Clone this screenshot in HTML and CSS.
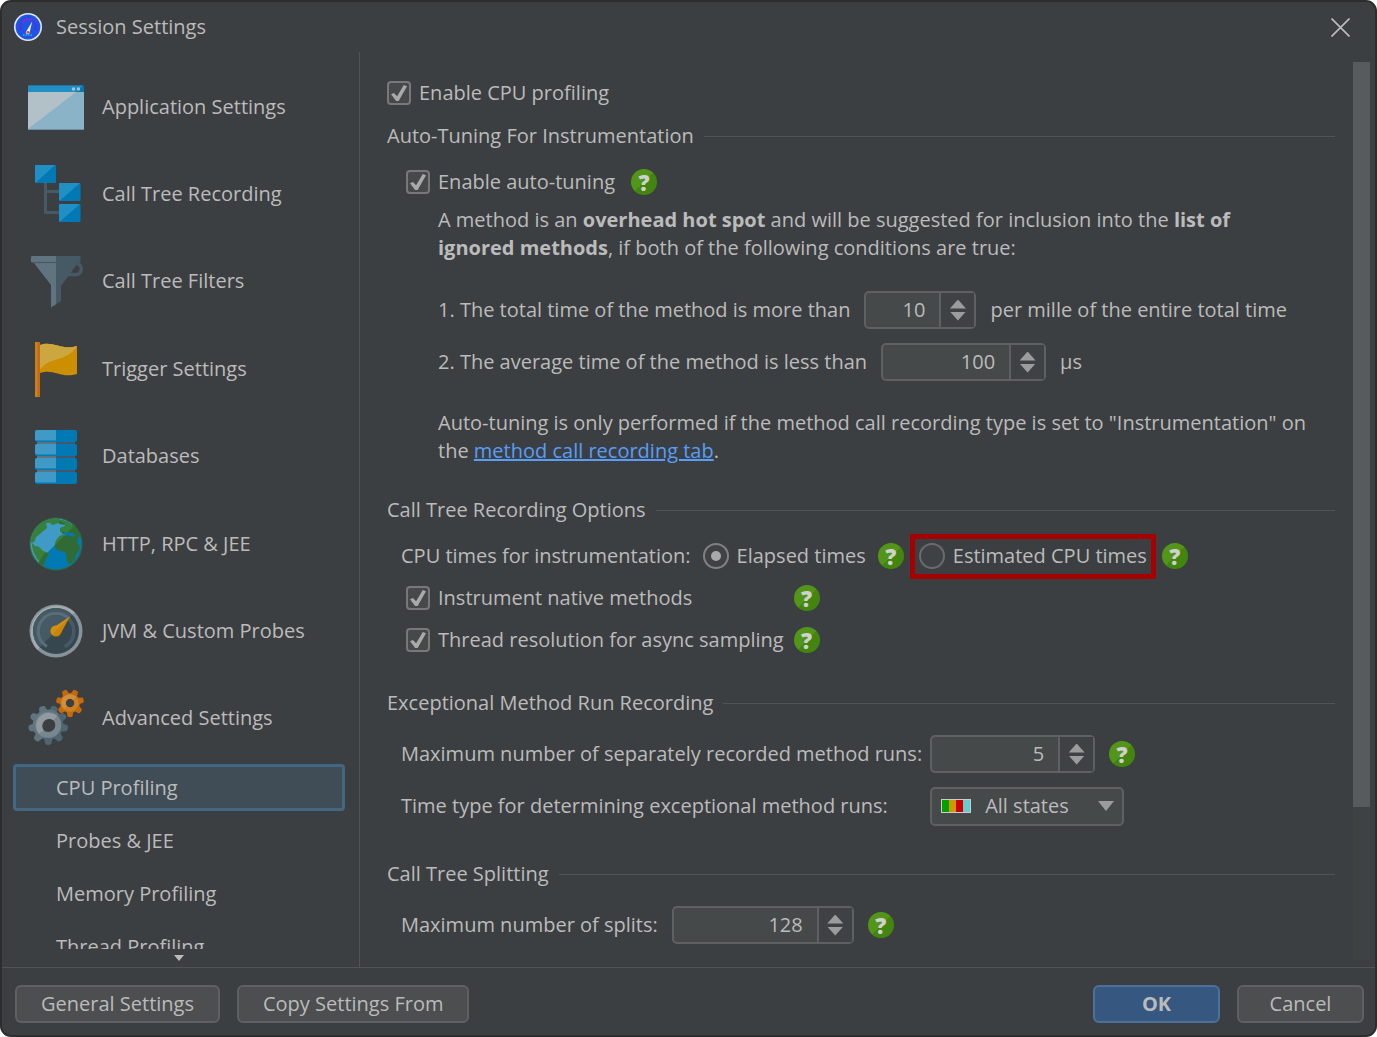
FILE: index.html
```html
<!DOCTYPE html>
<html lang="en">
<head>
  <meta charset="utf-8">
  <title>Session Settings</title>
  <link rel="stylesheet" href="styles.css">
</head>
<body>
  <div class="dialog">
    <header class="titlebar">
      <svg class="logo" viewBox="0 0 28 28" aria-hidden="true">
        <circle cx="14" cy="14" r="14" fill="#dfe6f5"/>
        <circle cx="14" cy="14" r="12.4" fill="#1d55e6"/>
        <circle cx="14" cy="14" r="10" fill="none" stroke="#3a45d8" stroke-dasharray="1 1.6"/>
        <path d="M7 17.5a7.8 7.8 0 1 1 14 0" fill="none" stroke="#5a2fd0" stroke-width="1.6"/>
        <path d="M8 10a7.8 7.8 0 0 1 10-3" fill="none" stroke="#8a2fd0" stroke-width="1.6"/>
        <path d="M9 22h10" stroke="#1fa3d8" stroke-width="2" stroke-dasharray="1.5 1"/>
        <path d="M18.2 8.5 15.6 19.5a1.8 1.8 0 1 1-3.2-1.3z" fill="#f2f4fb"/>
        <circle cx="14" cy="19.3" r="1.4" fill="#e0452c"/>
      </svg>
      <h1>Session Settings</h1>
      <button type="button" class="close" aria-label="Close">
        <svg viewBox="0 0 18 18" aria-hidden="true"><path d="M.5.5l17 17M17.5.5l-17 17" stroke="#bbb" stroke-width="1.6"/></svg>
      </button>
    </header>

    <div class="body">
      <nav class="sidebar">
        <div class="nav-scroll">
          <ul class="sections">
            <li><a href="#application">
              <svg viewBox="0 0 56 56" aria-hidden="true">
                <path d="M0 13h56v38H0z" fill="#8ab3c8"/>
                <path d="M0 13h48L0 50z" fill="#b2c0c8"/>
                <path d="M0 7.500a1 1 0 0 1 1-1h54a1 1 0 0 1 1 1V13H0z" fill="#0079b5"/>
                <path d="M0 7.500a1 1 0 0 1 1-1h54L48 13H0z" fill="#208fc4"/>
                <path d="M0 50.500h56" stroke="#7291a3"/>
                <circle cx="45.500" cy="10" r="1.700" fill="#b2c0c8"/>
                <circle cx="50.500" cy="10" r="1.700" fill="#b2c0c8"/>
              </svg>
              Application Settings</a></li>
            <li><a href="#recording">
              <svg viewBox="0 0 56 56" aria-hidden="true">
                <path d="M17.500 16v30.500H32M17.500 25.500H32" fill="none" stroke="#455a64" stroke-width="3"/>
                <g fill="#0079b5">
                  <rect x="7" y="-1" width="21" height="18" rx="1"/>
                  <rect x="31" y="17" width="21.500" height="18" rx="1"/>
                  <rect x="31" y="38" width="21.500" height="18" rx="1"/>
                </g>
                <path d="M7 0a1 1 0 0 1 1-1h19L8 16.500H7zM31 18a1 1 0 0 1 1-1h20L32 34.500h-1zM31 39a1 1 0 0 1 1-1h20L32 55.500h-1z" fill="#208fc4"/>
              </svg>
              Call Tree Recording</a></li>
            <li><a href="#filters">
              <svg viewBox="0 0 56 56" aria-hidden="true">
                <path d="M38 21.500h8a5 5 0 0 0 3-11" fill="none" stroke="#455a64" stroke-width="3.500"/>
                <path d="M3 4a1 1 0 0 1 1-1h24v29h-5L6 10 3 9z" fill="#607480"/>
                <path d="M28 3h24.500v6L50 10 33 33v15l-10 6.500 5-6z" fill="#455a64"/>
                <path d="M23 32h5v19.200l-5 3.300z" fill="#607480"/>
                <path d="M4 9.500h24" stroke="#485a64" stroke-width="1.200"/>
              </svg>
              Call Tree Filters</a></li>
            <li><a href="#triggers">
              <svg viewBox="0 0 56 56" aria-hidden="true">
                <path d="M7 1h5v55H7z" fill="#c36a12"/>
                <path d="M7 1h2.500v55H7z" fill="#c5821f"/>
                <path d="M12 4c13-5 22 6 37 1v28c-16 5-23-6-37-1z" fill="#cc8f00"/>
                <path d="M12 4c13-5 22 6 37 1-9 16-30 11-37 24z" fill="#cca63f"/>
              </svg>
              Trigger Settings</a></li>
            <li><a href="#databases">
              <svg viewBox="0 0 56 56" aria-hidden="true">
                <path d="M9 9h38v40H9z" fill="#3f5966"/>
                <path d="M9 9h19v40H9z" fill="#607480"/>
                <g fill="#0079b5">
                  <rect x="7" y="2" width="42" height="12" rx="2"/>
                  <rect x="7" y="16" width="42" height="12" rx="2"/>
                  <rect x="7" y="30" width="42" height="12" rx="2"/>
                  <rect x="7" y="44" width="42" height="12" rx="2"/>
                </g>
                <path d="M28 2H9q-2 0-2 2v7q0 1.500 2 1.500h19zM28 16H9q-2 0-2 2v7q0 1.500 2 1.500h19zM28 30H9q-2 0-2 2v7q0 1.500 2 1.500h19zM28 44H9q-2 0-2 2v7q0 1.500 2 1.500h19z" fill="#3f9ac6"/>
              </svg>
              Databases</a></li>
            <li><a href="#http">
              <svg viewBox="0 0 56 56" aria-hidden="true">
                <clipPath id="globe"><circle cx="28" cy="28" r="25.500"/></clipPath>
                <circle cx="28" cy="28" r="26.500" fill="#306b35"/>
                <g clip-path="url(#globe)">
                  <path d="M0 0h56v56H0z" fill="#0079b5"/>
                  <path d="M0 0h56L0 56z" fill="#3f9ac6"/>
                  <path d="M2 27c3 0 3 1 5 3 5 0 6 3 8 5l6 2c-1 4-4 5-4 9-2 2-2 5 0 8L8 50C2 44 1 34 2 27z" fill="#36803a"/>
                  <path d="M3 27q1 12 8 19" fill="none" stroke="#3f9ac6" stroke-width="1.500"/>
                  <path d="M17 37l4 0c-1 4-4 5-4 9-2 1-2 5 0 8l-6-4q-1-4 3-9z" fill="#306b35"/>
                  <path d="M2 26C3 13 13 4 21 3l9-1c4 0 2 5-2 6l-4 1-2-2-4 0 1 5-6 5-5 4-1 4q-2 3-7 1z" fill="#36803a"/>
                  <path d="M31 5c4-2 9 1 13 4l3-1 6 11 1 5-3-4-2 6 3 5c0 4-3 5-4 8-1 5-3 7-7 9-3-2-2-8-4-12l-4-1c-4 0-7-3-6-7 1-4 4-8 8-9l3 1 2-1 6 2 1-2-6-3-3 1-4 1-1-4 6-3c0-3-5-2-8-3z" fill="#306b35"/>
                  <path d="M31 5c4-2 9 1 13 4l1 2L27 29c0-4 4-10 8-10l1-3-4 0 0-4 5-2c0-3-3-4-6-5z" fill="#36803a"/>
                  <path d="M36 17l4 1 5 0" stroke="#0079b5" stroke-width="2" fill="none"/>
                </g>
              </svg>
              HTTP, RPC &amp; JEE</a></li>
            <li><a href="#probes">
              <svg viewBox="0 0 56 56" aria-hidden="true">
                <circle cx="28" cy="28" r="26.500" fill="#87939a"/>
                <path d="M9.300 46.700A26.500 26.500 0 0 1 46.700 9.300z" fill="#a3abaf"/>
                <circle cx="28" cy="28" r="23" fill="#37474f"/>
                <path d="M11.700 44.300A23 23 0 0 1 44.300 11.700z" fill="#455a64"/>
                <path d="M19 43.500a17.800 17.800 0 1 1 18 0" fill="none" stroke="#5a6e79" stroke-width="3"/>
                <path d="M41 16a17.800 17.800 0 0 1-4 27.500" fill="none" stroke="#455a64" stroke-width="3"/>
                <path d="M42 13.500 33 30l-7-6z" fill="#cc8500"/>
                <circle cx="28" cy="28" r="5.500" fill="#cc8500"/>
                <path d="M42 13.500 24 31.500a5.500 5.500 0 0 1 5-9z" fill="#d09018"/>
              </svg>
              JVM &amp; Custom Probes</a></li>
            <li><a href="#advanced">
              <svg viewBox="0 0 56 56" aria-hidden="true">
                <defs>
                  <path id="tooth" d="M-4.500-12 -3-19q3-2 6 0L4.500-12z"/>
                  <path id="cog" d="M-3.500-8-2.500-13.500q2.500-1 5 0L3.500-8z"/>
                </defs>
                <g transform="translate(20.300 35)" fill="#4f6571">
                  <circle r="15"/>
                  <use href="#tooth" transform="rotate(20)"/>
                  <use href="#tooth" transform="rotate(60)"/>
                  <use href="#tooth" transform="rotate(100)"/>
                  <use href="#tooth" transform="rotate(140)"/>
                  <use href="#tooth" transform="rotate(180)"/>
                  <g fill="#607480">
                    <path d="M-11 11A15 15 0 0 1 11-11z"/>
                    <use href="#tooth" transform="rotate(220)"/>
                    <use href="#tooth" transform="rotate(260)"/>
                    <use href="#tooth" transform="rotate(300)"/>
                    <use href="#tooth" transform="rotate(340)"/>
                  </g>
                  <circle r="10" fill="#3c3f41" stroke="#78868d" stroke-width="6"/>
                  <path d="M-7 7A10 10 0 0 1 7-7" fill="none" stroke="#909a9f" stroke-width="6"/>
                </g>
                <g transform="translate(42 13)" fill="#c46a08">
                  <circle r="10"/>
                  <use href="#cog" transform="rotate(26)"/>
                  <use href="#cog" transform="rotate(77)"/>
                  <use href="#cog" transform="rotate(129)"/>
                  <use href="#cog" transform="rotate(180)"/>
                  <use href="#cog" transform="rotate(231)"/>
                  <use href="#cog" transform="rotate(283)"/>
                  <use href="#cog" transform="rotate(334)"/>
                  <circle r="6.500" fill="#3c3f41" stroke="#cc8128" stroke-width="4.500"/>
                  <path d="M-4.600 4.600A6.500 6.500 0 0 1 4.600-4.600" fill="none" stroke="#d08f3e" stroke-width="4.500"/>
                </g>
              </svg>
              Advanced Settings</a></li>
          </ul>
          <ul class="pages">
            <li><a href="#cpu" class="selected">CPU Profiling</a></li>
            <li><a href="#jee">Probes &amp; JEE</a></li>
            <li><a href="#memory">Memory Profiling</a></li>
            <li><a href="#thread">Thread Profiling</a></li>
          </ul>
        </div>
        <button type="button" class="more" aria-label="Scroll down">
          <svg viewBox="0 0 10 6" aria-hidden="true"><path d="M0 0h10L5 6z" fill="#bbb"/></svg>
        </button>
      </nav>

      <main class="content">
        <label class="check"><input type="checkbox" checked>Enable CPU profiling</label>

        <section>
          <h2>Auto-Tuning For Instrumentation</h2>
          <div class="row indent">
            <label class="check"><input type="checkbox" checked>Enable auto-tuning</label>
            <button type="button" class="help">?</button>
          </div>
          <div class="details">
            <p>A method is an <b>overhead hot spot</b> and will be suggested for inclusion into the <b>list of<br>ignored methods</b>, if both of the following conditions are true:</p>
            <div class="conditions">
              <div class="field">
                <label for="total">1. The total time of the method is more than</label>
                <span class="spinner short">
                  <input type="number" id="total" value="10">
                  <span class="arrows">
                    <button type="button" aria-label="Increase"></button>
                    <button type="button" class="down" aria-label="Decrease"></button>
                  </span>
                </span>
                <span>per mille of the entire total time</span>
              </div>
              <div class="field">
                <label for="average">2. The average time of the method is less than</label>
                <span class="spinner">
                  <input type="number" id="average" value="100">
                  <span class="arrows">
                    <button type="button" aria-label="Increase"></button>
                    <button type="button" class="down" aria-label="Decrease"></button>
                  </span>
                </span>
                <span>µs</span>
              </div>
            </div>
            <p>Auto-tuning is only performed if the method call recording type is set to "Instrumentation" on<br>the <a href="#recording">method call recording tab</a>.</p>
          </div>
        </section>

        <section>
          <h2>Call Tree Recording Options</h2>
          <div class="row times" role="radiogroup" aria-labelledby="times-label">
            <span id="times-label">CPU times for instrumentation:</span>
            <label class="check"><input type="radio" name="times" checked>Elapsed times</label>
            <button type="button" class="help">?</button>
            <label class="check marked"><input type="radio" name="times">Estimated CPU times</label>
            <button type="button" class="help">?</button>
          </div>
          <div class="options indent">
            <label class="check"><input type="checkbox" checked>Instrument native methods</label>
            <button type="button" class="help">?</button>
            <label class="check"><input type="checkbox" checked>Thread resolution for async sampling</label>
            <button type="button" class="help">?</button>
          </div>
        </section>

        <section>
          <h2>Exceptional Method Run Recording</h2>
          <div class="form-grid">
            <label for="runs">Maximum number of separately recorded method runs:</label>
            <div class="field">
              <span class="spinner">
                <input type="number" id="runs" value="5">
                <span class="arrows">
                  <button type="button" aria-label="Increase"></button>
                  <button type="button" class="down" aria-label="Decrease"></button>
                </span>
              </span>
              <button type="button" class="help">?</button>
            </div>
            <label for="timetype">Time type for determining exceptional method runs:</label>
            <div class="field">
              <span class="combo">
                <svg class="states" viewBox="0 0 30 14" aria-hidden="true">
                  <path d="M0 0h30v14H0z" fill="#ccc"/>
                  <path d="M1 1h7v12H1z" fill="#00a000"/>
                  <path d="M8 1h7v12H8z" fill="#cc9a00"/>
                  <path d="M15 1h7v12h-7z" fill="#cc0000"/>
                  <path d="M22 1h7v12h-7z" fill="#66cccc"/>
                </svg>
                <select id="timetype">
                  <option>All states</option>
                </select>
                <svg class="caret" viewBox="0 0 16 10" aria-hidden="true"><path d="M0 0h16L8 10z" fill="#9c9c9c"/></svg>
              </span>
            </div>
          </div>
        </section>

        <section>
          <h2>Call Tree Splitting</h2>
          <div class="field inset">
            <label for="splits">Maximum number of splits:</label>
            <span class="spinner wide">
              <input type="number" id="splits" value="128">
              <span class="arrows">
                <button type="button" aria-label="Increase"></button>
                <button type="button" class="down" aria-label="Decrease"></button>
              </span>
            </span>
            <button type="button" class="help">?</button>
          </div>
        </section>
      </main>

      <div class="scrollbar"><div class="thumb"></div></div>
    </div>

    <footer class="footer">
      <button type="button" class="btn">General Settings</button>
      <button type="button" class="btn">Copy Settings From</button>
      <span class="spacer"></span>
      <button type="button" class="btn primary">OK</button>
      <button type="button" class="btn narrow">Cancel</button>
    </footer>
  </div>
</body>
</html>
```
FILE: styles.css
```css
* {
  box-sizing: border-box;
}

body {
  margin: 0;
  background: #fff;
  color: #bbb;
  font-family: "Open Sans", "Noto Sans", sans-serif;
  font-size: 20px;
  line-height: 28px;
}

h1, h2, p, ul {
  margin: 0;
  padding: 0;
  font-size: 20px;
  font-weight: normal;
}

ul {
  list-style: none;
}

button, input, select {
  font: inherit;
  color: inherit;
}

button {
  padding: 0;
  border: none;
  background: none;
  cursor: pointer;
}

.dialog {
  display: flex;
  flex-direction: column;
  height: 100vh;
  border: 2px solid #2d2d2e;
  border-radius: 11px;
  background: #3c3f41;
  overflow: hidden;
}

/* title bar */
.titlebar {
  display: flex;
  align-items: center;
  gap: 14px;
  height: 50px;
  padding: 0 25px 0 12px;
}

.logo {
  width: 28px;
  height: 28px;
}

.close {
  display: flex;
  margin-left: auto;
}

.close svg {
  width: 19px;
  height: 19px;
}

.body {
  display: flex;
  flex: 1;
  min-height: 0;
}

/* sidebar */
.sidebar {
  display: flex;
  flex-direction: column;
  flex: 0 0 358px;
  border-right: 1px solid #515355;
}

.nav-scroll {
  flex: 1;
  min-height: 0;
  padding: 11px 14px 0 11px;
  overflow: hidden;
}

.sections {
  display: grid;
  grid-template-rows: repeat(8, 1fr);
  height: 699px;
}

.sections a {
  display: flex;
  align-items: center;
  gap: 18px;
  height: 100%;
  padding-left: 15px;
}

.sections svg {
  width: 56px;
  height: 56px;
  overflow: visible;
}

.sidebar a {
  color: inherit;
  text-decoration: none;
}

.pages a {
  display: block;
  height: 47px;
  margin: 2px 0 6px;
  padding: 7px 40px;
  border: 3px solid transparent;
  border-radius: 4px;
}

.pages a.selected {
  border-color: #436682;
  background: #414d56;
}

.more {
  display: flex;
  justify-content: center;
  align-items: center;
  height: 18px;
  padding: 0 14px 0 11px;
}

.more svg {
  width: 10px;
  height: 6px;
}

/* settings */
.content {
  flex: 1;
  padding: 20px 18px 0 27px;
  overflow: hidden;
  white-space: nowrap;
}

section + section {
  margin-top: 20px;
}

h2 {
  display: flex;
  align-items: center;
  gap: 10px;
  height: 44px;
  margin-bottom: 3px;
}

h2::after {
  content: "";
  flex: 1;
  border-top: 1px solid #515355;
}

.row {
  display: flex;
  align-items: center;
  gap: 16px;
  height: 42px;
}

.indent {
  padding-left: 19px;
}

.details {
  padding: 3px 0 3px 51px;
}

.details a {
  color: #589df6;
}

.conditions {
  padding: 22px 0 21px;
}

.field {
  display: flex;
  align-items: center;
  gap: 14px;
  height: 52px;
}

.inset,
.times {
  padding-left: 14px;
}

.check {
  display: flex;
  align-items: center;
  gap: 8px;
  height: 42px;
}

.check input {
  display: grid;
  place-items: center;
  flex: none;
  appearance: none;
  width: 24px;
  height: 24px;
  margin: 0;
  border: 2px solid #777879;
  border-radius: 4px;
  background: #45494a;
}

.check input[type="checkbox"]:checked::before {
  content: "";
  width: 16px;
  height: 16px;
  background: #a9a9a9;
  clip-path: polygon(0 58%, 18% 50%, 38% 70%, 80% 0, 100% 8%, 48% 100%, 32% 100%);
}

.check input[type="radio"] {
  width: 26px;
  height: 26px;
  border-color: #6a6b6c;
  border-radius: 50%;
  background: #3f4244;
}

.check input[type="radio"]:checked {
  border-color: #808182;
}

.check input[type="radio"]:checked::before {
  content: "";
  width: 10px;
  height: 10px;
  border-radius: 50%;
  background: #a9a9a9;
}

.times {
  gap: 12px;
}

.marked {
  height: 45px;
  margin: 0 -6px;
  padding: 0 4px;
  border: 5px solid #a60000;
}

.help {
  width: 26px;
  height: 26px;
  border-radius: 50%;
  background: linear-gradient(135deg, #539518 50%, #43860f 50%);
  color: #d0d0d0;
  font-size: 22px;
  font-weight: 800;
  line-height: 26px;
}

.options {
  display: grid;
  grid-template-columns: max-content 1fr;
  align-items: center;
  column-gap: 10px;
}

.form-grid {
  display: grid;
  grid-template-columns: max-content 1fr;
  align-items: center;
  column-gap: 8px;
  padding-left: 14px;
}

.spinner {
  display: flex;
  width: 165px;
  height: 38px;
  border: 2px solid #5e6061;
  border-radius: 5px;
  background: #45494a;
}

.spinner.short {
  width: 112px;
}

.spinner.wide {
  width: 182px;
}

.spinner input {
  flex: 1;
  min-width: 0;
  padding: 0 14px 0 0;
  border: none;
  background: none;
  text-align: right;
  appearance: textfield;
}

.spinner input::-webkit-inner-spin-button {
  display: none;
}

.arrows {
  display: flex;
  flex-direction: column;
  justify-content: center;
  align-items: center;
  gap: 3px;
  width: 35px;
  border-left: 2px solid #5e6061;
  background: #3f4244;
}

.arrows button {
  width: 16px;
  height: 9px;
  background: #9c9c9c;
  clip-path: polygon(0 100%, 50% 0, 100% 100%);
}

.arrows .down {
  clip-path: polygon(0 0, 100% 0, 50% 100%);
}

.combo {
  position: relative;
  display: flex;
  align-items: center;
}

.combo select {
  width: 194px;
  height: 39px;
  padding: 0 40px 0 53px;
  border: 2px solid #5e6061;
  border-radius: 5px;
  background: #45494a;
  appearance: none;
}

.combo svg {
  position: absolute;
  pointer-events: none;
}

.states {
  left: 11px;
  width: 30px;
  height: 14px;
}

.caret {
  right: 10px;
  width: 16px;
  height: 10px;
}

.scrollbar {
  width: 17px;
  margin: 10px 5px 7px 0;
  background: #3f4243;
}

.thumb {
  height: 83%;
  background: #585b5d;
}

/* buttons */
.footer {
  display: flex;
  align-items: center;
  gap: 17px;
  height: 68px;
  padding: 4px 11px 0 13px;
  border-top: 1px solid #515355;
}

.spacer {
  flex: 1;
}

.btn {
  height: 38px;
  padding: 0 24px;
  border: 2px solid #5e6061;
  border-radius: 6px;
  background: #4c4e50;
}

.btn.narrow,
.btn.primary {
  width: 127px;
}

.btn.primary {
  border-color: #4c7098;
  background: #365880;
  font-weight: bold;
}
```
